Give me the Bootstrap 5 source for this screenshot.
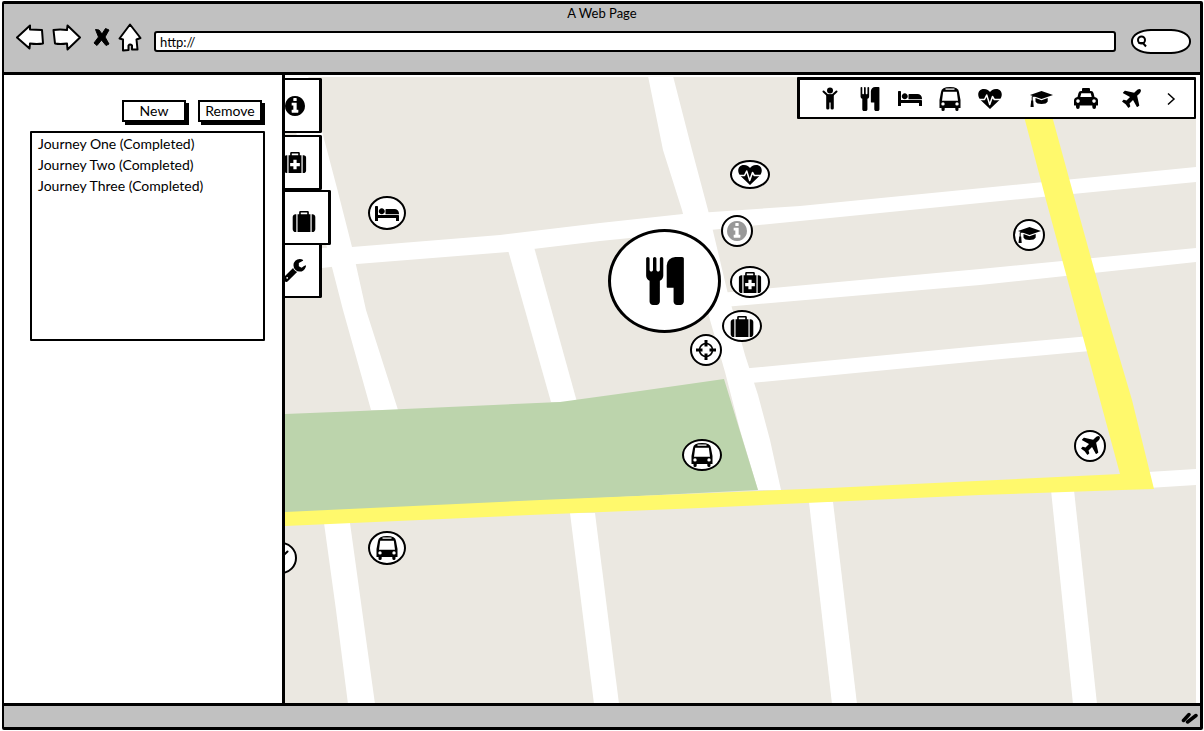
<!DOCTYPE html>
<html lang="en">
<head>
<meta charset="utf-8">
<meta name="viewport" content="width=device-width, initial-scale=1">
<title>A Web Page</title>
<link href="https://cdn.jsdelivr.net/npm/bootstrap@5.3.0/dist/css/bootstrap.min.css" rel="stylesheet">
<style>
  body { font-family: Lato, "Liberation Sans", sans-serif; font-size: 14px; line-height: 21px; color: #000; background: #fff; padding: 1px 1px 1px 2px; }
  button { color: #000; }
  svg { display: block; }
  .frame { min-height: calc(100vh - 2px); border: 3px solid #000; border-left-width: 2px; border-radius: 2px; }
  .chrome { background: #c1c1c1; }
  .chrome-top { height: 71px; border-bottom: 3px solid #000; }
  .chrome-bottom { height: 24px; border-top: 3px solid #000; padding-right: 2px; }
  .page-title { line-height: 19px; font-size: 13px; }
  .nav-row { padding: 0 9px 0 12px; height: 36px; }
  .nav-icons { gap: 8px; margin-right: 12px; }
  .plain-btn { background: none; border: 0; padding: 0; display: flex; align-items: center; justify-content: center; }
  .url-box { height: 21px; border: 2px solid #000; border-radius: 3px; padding: 0 4px; margin: 8px 15px 0 0; font-size: 13px; line-height: 16px; min-width: 0; outline: 0; color: #000; }
  .search-pill { width: 60px; height: 25px; margin-top: 6px; background: #fff; border: 2px solid #000; border-radius: 20px / 12px; padding-left: 3px; }
  .search-pill input { border: 0; background: none; min-width: 0; outline: 0; padding: 0 4px; }
  .sidebar { width: 281px; border-right: 3px solid #000; padding: 25px 17px 24px 26px; }
  .sketch-btn { height: 22px; width: 64px; border: 2px solid #000; background: #fff; box-shadow: 3px 3px 0 #000; padding: 0; line-height: 16px; }
  .sketch-row { gap: 12px; padding-right: 3px; }
  .journeys { height: 210px; border: 2px solid #000; border-radius: 1px; margin: 9px 0 0; padding: 0 6px; }
  .journeys a { color: #000; text-decoration: none; }
  .map-area { padding: 2px 4px 0 0; min-width: 0; }
  .map { overflow: hidden; background: #ebe8e1; }
  .map-art { position: absolute; width: 100%; height: 100%; }
  .tabs { position: absolute; left: 0; top: 1px; }
  .tab { width: 37px; height: 55px; background: #fff; border: 2px solid #000; border-left: 0; border-right-width: 3px; border-radius: 0 2px 2px 0; justify-content: flex-start; overflow: hidden; }
  .tab-open { width: 46px; padding: 8px 0 0 7px; }
  .tab-cut svg { margin-left: -2px; flex: none; }
  .tab-next { margin-top: 2px; }
  .tab-over { margin-top: -2px; }
  .tools { position: absolute; right: 0; top: 0; height: 42px; background: #fff; border: 3px solid #000; border-right-width: 2px; border-bottom-width: 2px; border-radius: 1px; padding: 0 8px 0 10px; }
  .tool { width: 40px; height: 37px; }
  .tool-more { width: 30px; }
  .tools-extra { gap: 5px; margin-left: 11px; }
  .pin { position: absolute; width: 32px; height: 32px; background: #fff; border: 2px solid #000; border-radius: 50%; }
  .pin svg { flex: none; }
  .pin-wide { width: 40px; }
  .pin-mid { width: 38px; height: 34px; }
  .pin-low { width: 40px; height: 29px; }
  .pin-big { width: 113px; height: 104px; border-width: 3px; }
</style>
</head>
<body>
<svg width="0" height="0" class="position-absolute" aria-hidden="true">
  <symbol id="info" viewBox="128 128 1536 1536"><path d="M1152 1376v-160q0-14-9-23t-23-9h-96v-512q0-14-9-23t-23-9h-320q-14 0-23 9t-9 23v160q0 14 9 23t23 9h96v320h-96q-14 0-23 9t-9 23v160q0 14 9 23t23 9h448q14 0 23-9t9-23zm-128-896v-160q0-14-9-23t-23-9h-192q-14 0-23 9t-9 23v160q0 14 9 23t23 9h192q14 0 23-9t9-23zm640 416q0 209-103 385.500t-279.500 279.500-385.500 103-385.500-103-279.500-279.500-103-385.500 103-385.500 279.500-279.500 385.500-103 385.500 103 279.500 279.500 103 385.500z"/></symbol>
  <symbol id="suitcase" viewBox="0 0 1792 1664"><path d="M640 256h512v-128h-512v128zm-352 0v1408h-64q-92 0-158-66t-66-158v-960q0-92 66-158t158-66h64zm1120 0v1408h-1024v-1408h128v-160q0-40 28-68t68-28h576q40 0 68 28t28 68v160h128zm384 224v960q0 92-66 158t-158 66h-64v-1408h64q92 0 158 66t66 158z"/></symbol>
  <symbol id="medkit" viewBox="0 0 1792 1664"><use href="#suitcase" width="1792" height="1664"/><path fill="#fff" d="M768 608h256v256h256v256h-256v256h-256v-256h-256v-256h256z"/></symbol>
  <symbol id="wrench" viewBox="85 128 1642 1642"><path d="M448 1472q0-26-19-45t-45-19-45 19-19 45 19 45 45 19 45-19 19-45zm644-420l-682 682q-37 37-90 37-52 0-91-37l-106-108q-38-36-38-90 0-53 38-91l681-681q39 98 114.500 173.500t173.500 114.500zm634-435q0 39-23 106-47 134-164.500 217.500t-258.500 83.500q-185 0-316.500-131.500t-131.500-316.500 131.500-316.500 316.500-131.500q58 0 121.500 16.500t107.500 46.500q16 11 16 28t-16 28l-293 169v224l193 107q5-3 79-48.500t135.500-81 70.500-35.500q15 0 23.500 10t8.500 25z"/></symbol>
  <symbol id="food" viewBox="192 0 1408 1792"><path d="M832 64v640q0 61-35.500 111t-92.500 70v779q0 52-38 90t-90 38h-128q-52 0-90-38t-38-90v-779q-57-20-92.500-70t-35.500-111v-640q0-26 19-45t45-19 45 19 19 45v416q0 26 19 45t45 19 45-19 19-45v-416q0-26 19-45t45-19 45 19 19 45v416q0 26 19 45t45 19 45-19 19-45v-416q0-26 19-45t45-19 45 19 19 45zm768 0v1600q0 52-38 90t-90 38h-128q-52 0-90-38t-38-90v-512h-224q-13 0-22.500-9.500t-9.500-22.500v-800q0-132 94-226t226-94h256q26 0 45 19t19 45z"/></symbol>
  <symbol id="bed" viewBox="0 256 2048 1280"><path d="M256 1024h1728q26 0 45 19t19 45v448h-256v-256h-1536v256h-256v-1216q0-26 19-45t45-19h128q26 0 45 19t19 45v704zm576-320q0-106-75-181t-181-75-181 75-75 181 75 181 181 75 181-75 75-181zm1216 256v-64q0-159-112.500-271.500t-271.500-112.500h-704q-26 0-45 19t-19 45v384h1152z"/></symbol>
  <symbol id="plane" viewBox="110 130 1490 1490"><path d="M1568 160q44 52 12 148t-108 172l-161 161 160 696q5 19-12 33l-128 96q-7 6-19 6-4 0-7-1-15-3-21-16l-279-508-259 259 53 194q5 17-8 31l-96 96q-9 9-23 9h-2q-15-2-24-13l-189-252-252-189q-11-7-13-23-1-13 9-25l96-97q9-9 23-9 6 0 8 1l194 53 259-259-508-279q-14-8-17-24-2-16 9-27l128-128q14-13 30-8l665 159 160-160q76-76 172-108t148 12z"/></symbol>
  <symbol id="child" viewBox="0 0 16 23"><circle cx="8" cy="3.500" r="3"/><path d="M1.500 4.500L5.500 8.300H10.500L14.500 4.500" fill="none" stroke="#000" stroke-width="2" stroke-linecap="round" stroke-linejoin="round"/><path d="M4.200 7.500H11.800V21.300Q11.800 22.500 10.200 22.500T8.600 21.300V15.500H7.400V21.300Q7.400 22.500 5.800 22.500T4.200 21.300Z"/></symbol>
  <symbol id="bus" viewBox="0 0 22 24"><path fill-rule="evenodd" d="M2 5Q2.500 0 11 0T20 5L21.500 13V21H19.500V22.500Q19.500 24 18 24T16.300 22.500V21H5.700V22.500Q5.700 24 4 24T2.500 22.500V21H.5V13ZM6.500 1.600V2.800H15.500V1.600ZM4.200 4.800L3 13.800H19L17.800 4.800ZM4 15.200A1.700 1.700 0 1 0 4 18.600A1.700 1.700 0 1 0 4 15.200ZM18 15.200A1.700 1.700 0 1 0 18 18.600A1.700 1.700 0 1 0 18 15.200Z"/></symbol>
  <symbol id="heart" viewBox="0 0 24 20"><path d="M12 20L2 10.500C-1 7-.5 0 6 0C9 0 11 1.500 12 3C13 1.500 15 0 18 0C24.500 0 25 7 22 10.500Z"/><path d="M0 10.500H6.500L8.700 6L11.700 15.500L14.500 7.500L16.300 10.500H24" fill="none" stroke="#fff" stroke-width="1.500" stroke-linejoin="round"/></symbol>
  <symbol id="cap" viewBox="0 0 24 16"><path d="M12.500 0L24 4L12.500 8L1 4ZM6.500 7L12.500 9.200L18.700 7V10.500Q17.500 13 12.500 13T6.500 10.500Z"/><path d="M11.500 3.800L3.200 5.500V11" fill="none" stroke="#000"/><path d="M2.200 9.500H4.200L4.700 16H1.500Z"/></symbol>
  <symbol id="taxi" viewBox="0 0 24 21"><path fill-rule="evenodd" d="M8 3V1Q8 0 9 0H15Q16 0 16 1V3H17Q19 3 19.500 5L20.500 9Q24 9.500 24 12.500V17Q24 17.500 23.300 17.500H22V19Q22 21 20.200 21T18.300 19V17.500H5.700V19Q5.700 21 3.900 21T2 19V17.500H.7Q0 17.500 0 17V12.500Q0 9.500 3.500 9L4.500 5Q5 3 7 3ZM7.300 5.200L6.300 9H17.700L16.700 5.200ZM4 11.300A1.800 1.800 0 1 0 4 14.900A1.800 1.800 0 1 0 4 11.300ZM20 11.300A1.800 1.800 0 1 0 20 14.900A1.800 1.800 0 1 0 20 11.300Z"/></symbol>
  <symbol id="target" viewBox="0 0 20 20"><circle cx="10" cy="10" r="6.500" fill="none" stroke="#000" stroke-width="1.600"/><path d="M0 10H6.500M13.500 10H20M10 0V6.500M10 13.500V20" stroke="#000" stroke-width="3"/></symbol>
</svg>

<div class="frame d-flex flex-column">
  <header class="chrome chrome-top">
    <div class="page-title text-center">A Web Page</div>
    <div class="nav-row d-flex align-items-start">
      <div class="nav-icons d-flex align-items-center">
        <button class="plain-btn" aria-label="Back"><svg width="28" height="28" viewBox="0 0 28 28"><path d="M1 13.500L14 1.500V5.500L26 6L27 19.500Q21 20.500 14 19.500L13.500 24.500Z" fill="#fff" stroke="#000" stroke-width="2" stroke-linejoin="round"/></svg></button>
        <button class="plain-btn" aria-label="Forward"><svg width="29" height="28" viewBox="0 0 29 28"><path d="M1.500 6Q8 5 15 6L15.500 1.500L28 13.500L15.500 25.500L15 19.500Q8 20.500 3 19.500Z" fill="#fff" stroke="#000" stroke-width="2" stroke-linejoin="round"/></svg></button>
        <button class="plain-btn ms-1" aria-label="Stop"><svg width="17" height="24" viewBox="0 0 17 24"><path d="M2.500 3.500L6 4L9 8L12.500 2.500L16 4L12 11L16 18L13 19.500L8.500 14L4 19.500L1 17L5.500 11Z" stroke="#000" stroke-linejoin="round"/></svg></button>
        <button class="plain-btn" aria-label="Home"><svg width="24" height="30" viewBox="0 0 24 30"><path d="M12 1.500L22.500 15L18.500 16.500L19.500 26.500H14V22.500Q12 20.500 10.500 22.500V27L5 27.500V16.500L1.500 15.500Z" fill="#fff" stroke="#000" stroke-width="2" stroke-linejoin="round"/></svg></button>
      </div>
      <input class="url-box flex-grow-1" type="text" value="http://" aria-label="Address">
      <label class="search-pill d-flex align-items-center"><svg class="flex-shrink-0" width="11" height="13" viewBox="0 0 11 13"><circle cx="5.500" cy="5" r="3.500" fill="none" stroke="#000" stroke-width="2"/><path d="M2.500 8L7 8L10 11.500" stroke="#000" stroke-width="2" fill="none"/></svg><input class="w-100" type="search" aria-label="Search"></label>
    </div>
  </header>

  <div class="d-flex flex-grow-1">
    <aside class="sidebar flex-shrink-0 bg-white">
      <div class="sketch-row d-flex justify-content-end">
        <button class="sketch-btn">New</button>
        <button class="sketch-btn">Remove</button>
      </div>
      <ul class="journeys list-unstyled">
        <li><a href="#">Journey One (Completed)</a></li>
        <li><a href="#">Journey Two (Completed)</a></li>
        <li><a href="#">Journey Three (Completed)</a></li>
      </ul>
    </aside>

    <main class="map-area d-flex flex-grow-1">
      <div class="map position-relative flex-grow-1">
        <svg class="map-art" viewBox="285 77 911 626" preserveAspectRatio="xMinYMin slice" aria-hidden="true">
          <g fill="#fff">
            <path d="M281 76L308 76L323 135L338 192L352 247L366 310L398 410H371L343 310L325 240Z"/>
            <path d="M320 248L352 247L500 235L600 223L683 214L800 206L1196 167V182L980 203L800 221L720 229L600 241L508 252L357 264L322 268Z"/>
            <path d="M720 293L980 269L1196 248V262L980 285L724 307Z"/>
            <path d="M740 369L980 346L1090 336V351L980 361L740 384Z"/>
            <path d="M648 76H673L692 150L708 210L727 290L745 355L758 395L770 440L781 490H758L740 430L725 372L710 320L682 210L663 150Z"/>
            <path d="M508 250L534 247L577 402H551Z"/>
            <path d="M324 523H350L362 610L375 704H348L336 610Z"/>
            <path d="M570 513H595L619 704H594Z"/>
            <path d="M809 502H833L857 704H832Z"/>
            <path d="M1051 490H1074L1097 704H1073Z"/>
            <path d="M1148 472L1196 469V485L1148 488Z"/>
          </g>
          <path fill="#bcd4ac" d="M285 414L360 411L560 402L640 391L724 379L758 490L540 501L285 514Z"/>
          <path fill="#fff96c" d="M285 512L540 500L830 488L1120 474L1046 200L1021 105H1049L1075 200L1104 305L1132 400L1154 489L1122 490L980 495L700 508L530 515L285 526Z"/>
        </svg>

        <button class="plain-btn pin pin-mid" style="left:83px;top:119px" aria-label="Hotel"><svg width="24" height="15"><use href="#bed"/></svg></button>
        <button class="plain-btn pin pin-low" style="left:445px;top:83px" aria-label="Health"><svg width="24" height="20"><use href="#heart"/></svg></button>
        <button class="plain-btn pin" style="left:436px;top:138px" aria-label="Information"><svg width="20" height="20" fill="#999"><use href="#info"/></svg></button>
        <button class="plain-btn pin pin-wide" style="left:445px;top:189px" aria-label="First aid"><svg width="24" height="21"><use href="#medkit"/></svg></button>
        <button class="plain-btn pin pin-wide" style="left:437px;top:233px" aria-label="Luggage"><svg width="24" height="21"><use href="#suitcase"/></svg></button>
        <button class="plain-btn pin" style="left:405px;top:257px" aria-label="Locate"><svg width="20" height="20"><use href="#target"/></svg></button>
        <button class="plain-btn pin pin-big" style="left:323px;top:152px" aria-label="Restaurant"><svg width="38" height="48"><use href="#food"/></svg></button>
        <button class="plain-btn pin" style="left:728px;top:142px" aria-label="University"><svg width="24" height="16"><use href="#cap"/></svg></button>
        <button class="plain-btn pin" style="left:789px;top:353px" aria-label="Airport"><svg width="20" height="20"><use href="#plane"/></svg></button>
        <button class="plain-btn pin pin-wide" style="left:397px;top:362px" aria-label="Bus stop"><svg width="22" height="24"><use href="#bus"/></svg></button>
        <button class="plain-btn pin pin-mid" style="left:83px;top:454px" aria-label="Bus stop"><svg width="22" height="24"><use href="#bus"/></svg></button>
        <button class="plain-btn pin" style="left:-20px;top:465px" aria-label="Family"><svg width="16" height="23"><use href="#child"/></svg></button>

        <nav class="tabs d-flex flex-column" aria-label="Panels">
          <button class="plain-btn tab" aria-label="Information"><svg width="20" height="20"><use href="#info"/></svg></button>
          <button class="plain-btn tab tab-cut tab-next" aria-label="First aid"><svg width="24" height="21"><use href="#medkit"/></svg></button>
          <button class="plain-btn tab tab-open" aria-label="Luggage"><svg width="24" height="21"><use href="#suitcase"/></svg></button>
          <button class="plain-btn tab tab-cut tab-over" aria-label="Settings"><svg width="23" height="23"><use href="#wrench"/></svg></button>
        </nav>

        <div class="tools d-flex">
          <button class="plain-btn tool" aria-label="Family"><svg width="16" height="23"><use href="#child"/></svg></button>
          <button class="plain-btn tool" aria-label="Restaurants"><svg width="20" height="24"><use href="#food"/></svg></button>
          <button class="plain-btn tool" aria-label="Hotels"><svg width="24" height="15"><use href="#bed"/></svg></button>
          <button class="plain-btn tool" aria-label="Buses"><svg width="22" height="24"><use href="#bus"/></svg></button>
          <button class="plain-btn tool" aria-label="Health"><svg width="24" height="20"><use href="#heart"/></svg></button>
          <div class="tools-extra d-flex">
            <button class="plain-btn tool" aria-label="Universities"><svg width="24" height="16"><use href="#cap"/></svg></button>
            <button class="plain-btn tool" aria-label="Taxis"><svg width="24" height="21"><use href="#taxi"/></svg></button>
            <button class="plain-btn tool" aria-label="Airports"><svg width="20" height="20"><use href="#plane"/></svg></button>
            <button class="plain-btn tool tool-more" aria-label="More"><svg width="10" height="14" viewBox="0 0 10 14"><path d="M2 1.500L8 7L2 12.500" fill="none" stroke="#000" stroke-width="1.500"/></svg></button>
          </div>
        </div>
      </div>
    </main>
  </div>

  <footer class="chrome chrome-bottom d-flex align-items-center justify-content-end">
    <svg width="18" height="14" viewBox="0 0 18 14" aria-hidden="true"><path d="M3.500 10.500L9 4.500M7.500 12L16 5.500" stroke="#000" stroke-width="3.500" stroke-linecap="round"/></svg>
  </footer>
</div>
<script src="https://cdn.jsdelivr.net/npm/bootstrap@5.3.0/dist/js/bootstrap.bundle.min.js"></script>
</body>
</html>
